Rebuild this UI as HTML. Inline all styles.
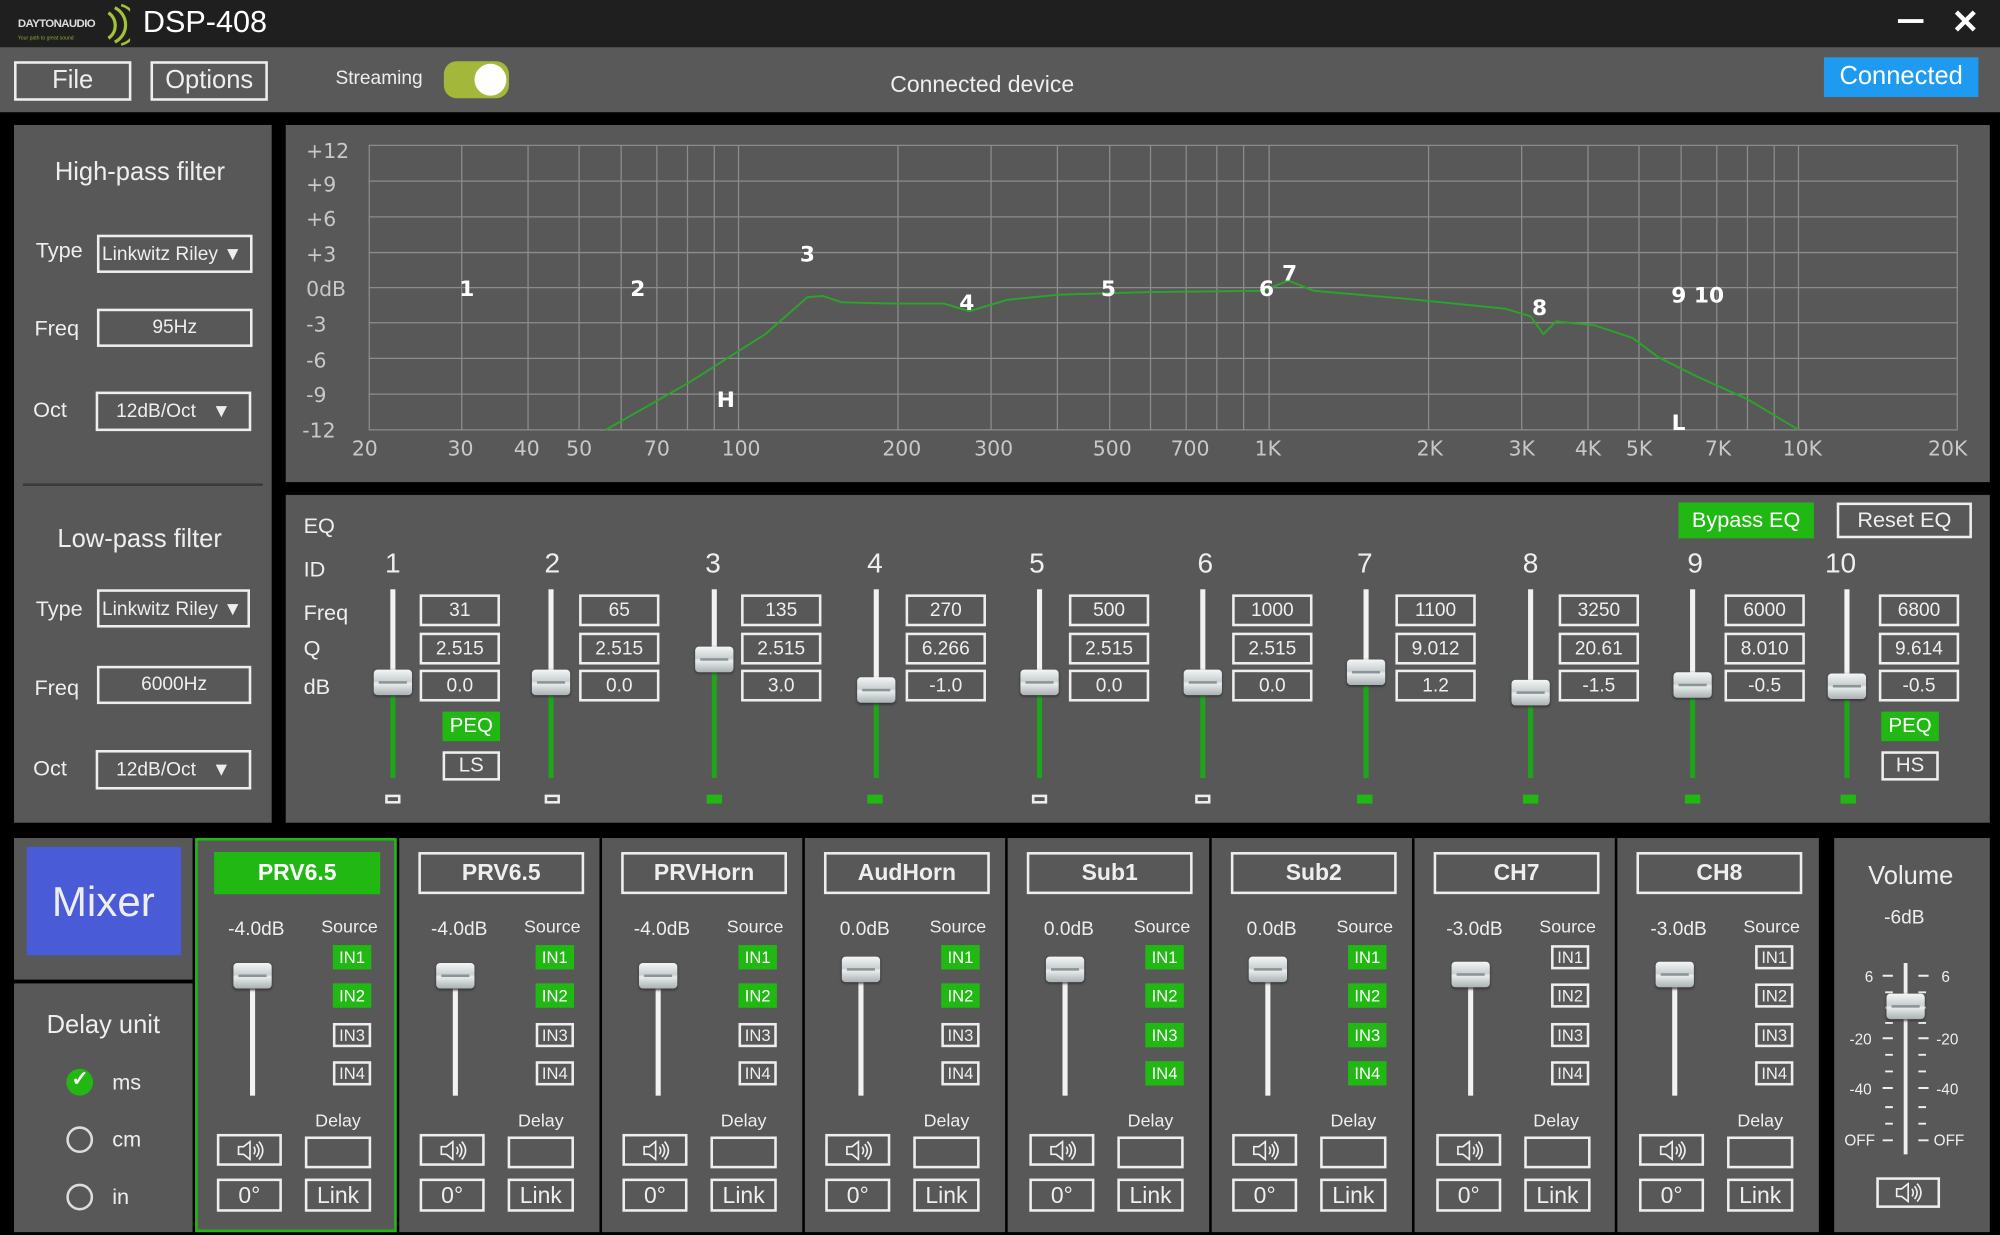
<!DOCTYPE html>
<html><head><meta charset="utf-8">
<style>
html,body{margin:0;padding:0;background:#000;width:2000px;height:1235px;overflow:hidden}
#r{position:absolute;left:0;top:0;width:1568px;height:968px;transform:scale(1.27551);transform-origin:0 0;font-family:"Liberation Sans",sans-serif;background:#000}
.p{position:absolute;background:#585858}
.t{position:absolute;color:#eee;white-space:nowrap;line-height:1}
.c{transform:translateX(-50%)}
.b{position:absolute;border:2px solid #eee;color:#eee;box-sizing:border-box;text-align:center;white-space:nowrap;display:flex;align-items:center;justify-content:center}
.g{background:#22b814;border-color:#22b814;color:#fff}
.h{position:absolute;width:30px;height:20px;border-radius:3px;background:linear-gradient(#f4f6f6,#c9cfd1 45%,#e8ecec 55%,#aab2b4);box-shadow:0 1px 2px #333}
.h:after{content:"";position:absolute;left:4px;right:4px;top:9px;height:2px;background:#8c9496}
.tw{position:absolute;width:4px;background:#f2f2f2}
.tg{position:absolute;width:4px;background:#1fa51a}
.v{font-size:15px}
.in{position:absolute;width:30px;height:19px;font-size:13px}
.ind{position:absolute;width:12px;height:7px;box-sizing:border-box}
.nm{font-size:18px;font-weight:bold}
</style></head><body><div id="r">
<div style="position:absolute;left:0;top:0;width:1568px;height:37px;background:#1f1f1f"></div>
<div class="t" style="left:14px;top:14px;font-size:9px;font-weight:bold;color:#ddd;letter-spacing:-0.5px">DAYTONAUDIO</div>
<div class="t" style="left:14px;top:28px;font-size:4px;color:#8a3">Your path to great sound</div>
<svg style="position:absolute;left:82px;top:2px" width="20" height="34"><path d="M3 8 A12 12 0 0 1 3 28" stroke="#a3c23a" stroke-width="2.5" fill="none"/><path d="M8 4 A15 15 0 0 1 8 31" stroke="#a3c23a" stroke-width="2.5" fill="none"/><path d="M13 2 A16 16 0 0 1 13 33" stroke="#a3c23a" stroke-width="2" fill="none"/></svg>
<div class="t" style="left:112px;top:6px;font-size:24px;color:#fff">DSP-408</div>
<div style="position:absolute;left:1488px;top:15px;width:20px;height:3px;background:#fff"></div>
<div class="t" style="left:1530px;top:4px;font-size:26px;color:#fff;font-weight:bold">✕</div>
<div style="position:absolute;left:0;top:37px;width:1568px;height:51px;background:#595959"></div>
<div class="b" style="left:11px;top:48px;width:92px;height:31px;font-size:20px">File</div>
<div class="b" style="left:118px;top:48px;width:92px;height:31px;font-size:20px">Options</div>
<div class="t" style="left:263px;top:54px;font-size:15px">Streaming</div>
<div style="position:absolute;left:348px;top:48px;width:51px;height:29px;border-radius:10px;background:#a3b83a"></div>
<div style="position:absolute;left:372px;top:50px;width:25px;height:25px;border-radius:50%;background:#fff"></div>
<div class="t" style="left:698px;top:57px;font-size:18px">Connected device</div>
<div class="b" style="left:1430px;top:45px;width:121px;height:31px;font-size:20px;background:#1e9bf0;border-color:#1e9bf0;color:#fff">Connected</div>

<div class="p" style="left:11px;top:98px;width:202px;height:547px"></div>
<div style="position:absolute;left:18px;top:379px;width:188px;height:2px;background:#3a3a3a"></div>
<div class="t" style="left:43px;top:125px;font-size:20px">High-pass filter</div>
<div class="t" style="left:28px;top:188px;font-size:17px">Type</div>
<div class="b" style="left:76px;top:184px;width:122px;height:30px;font-size:15px;justify-content:flex-start;padding-left:2px">Linkwitz Riley ▼</div>
<div class="t" style="left:27px;top:249px;font-size:17px">Freq</div>
<div class="b" style="left:76px;top:242px;width:122px;height:30px;font-size:15px;align-items:flex-start;padding-top:4px">95Hz</div>
<div class="t" style="left:26px;top:313px;font-size:17px">Oct</div>
<div class="b" style="left:75px;top:307px;width:122px;height:31px;font-size:15px">12dB/Oct &nbsp;&nbsp;▼</div>
<div class="t" style="left:45px;top:413px;font-size:20px">Low-pass filter</div>
<div class="t" style="left:28px;top:469px;font-size:17px">Type</div>
<div class="b" style="left:76px;top:462px;width:120px;height:30px;font-size:15px;justify-content:flex-start;padding-left:2px">Linkwitz Riley ▼</div>
<div class="t" style="left:27px;top:531px;font-size:17px">Freq</div>
<div class="b" style="left:76px;top:522px;width:121px;height:30px;font-size:15px;align-items:flex-start;padding-top:4px">6000Hz</div>
<div class="t" style="left:26px;top:594px;font-size:17px">Oct</div>
<div class="b" style="left:75px;top:588px;width:122px;height:31px;font-size:15px">12dB/Oct &nbsp;&nbsp;▼</div>

<div class="p" style="left:224px;top:98px;width:1336px;height:280px"></div>
<svg style="position:absolute;left:0;top:0" width="1568" height="968">
<g stroke="#8c8c8c" stroke-width="1">
<line x1="289" y1="114" x2="1535" y2="114"/><line x1="289" y1="142" x2="1535" y2="142"/><line x1="289" y1="170" x2="1535" y2="170"/><line x1="289" y1="198" x2="1535" y2="198"/><line x1="289" y1="225.5" x2="1535" y2="225.5"/><line x1="289" y1="253" x2="1535" y2="253"/><line x1="289" y1="281" x2="1535" y2="281"/><line x1="289" y1="309" x2="1535" y2="309"/><line x1="289" y1="337" x2="1535" y2="337"/>
<line x1="289.5" y1="114" x2="289.5" y2="337"/><line x1="362" y1="114" x2="362" y2="337"/><line x1="414" y1="114" x2="414" y2="337"/><line x1="454" y1="114" x2="454" y2="337"/><line x1="487" y1="114" x2="487" y2="337"/><line x1="515" y1="114" x2="515" y2="337"/><line x1="539" y1="114" x2="539" y2="337"/><line x1="560" y1="114" x2="560" y2="337"/><line x1="579" y1="114" x2="579" y2="337"/><line x1="704" y1="114" x2="704" y2="337"/><line x1="777" y1="114" x2="777" y2="337"/><line x1="829" y1="114" x2="829" y2="337"/><line x1="870" y1="114" x2="870" y2="337"/><line x1="902" y1="114" x2="902" y2="337"/><line x1="930" y1="114" x2="930" y2="337"/><line x1="954" y1="114" x2="954" y2="337"/><line x1="975" y1="114" x2="975" y2="337"/><line x1="995" y1="114" x2="995" y2="337"/><line x1="1120" y1="114" x2="1120" y2="337"/><line x1="1193" y1="114" x2="1193" y2="337"/><line x1="1245" y1="114" x2="1245" y2="337"/><line x1="1285" y1="114" x2="1285" y2="337"/><line x1="1318" y1="114" x2="1318" y2="337"/><line x1="1346" y1="114" x2="1346" y2="337"/><line x1="1370" y1="114" x2="1370" y2="337"/><line x1="1391" y1="114" x2="1391" y2="337"/><line x1="1410" y1="114" x2="1410" y2="337"/><line x1="1534.5" y1="114" x2="1534.5" y2="337"/>
</g>
<polyline fill="none" stroke="#2aa52a" stroke-width="1.5" points="475,337 540,300 600,262 633,233 645,232 660,237 700,238 740,238 760,244 790,235 830,231 900,229 990,228 1010,220 1030,228 1100,234 1180,242 1200,248 1210,262 1220,252 1250,255 1280,265 1300,280 1330,295 1370,313 1410,337"/>
<g font-family="DejaVu Sans,sans-serif" font-size="16" fill="#c8c8c8">
<text x="240" y="124">+12</text><text x="240" y="150">+9</text><text x="240" y="177">+6</text><text x="240" y="205">+3</text><text x="240" y="232">0dB</text><text x="240" y="260">-3</text><text x="240" y="288">-6</text><text x="240" y="315">-9</text><text x="237" y="343">-12</text>
<g text-anchor="middle"><text x="286" y="357">20</text><text x="361" y="357">30</text><text x="413" y="357">40</text><text x="454" y="357">50</text><text x="515" y="357">70</text><text x="581" y="357">100</text><text x="707" y="357">200</text><text x="779" y="357">300</text><text x="872" y="357">500</text><text x="933" y="357">700</text><text x="994" y="357">1K</text><text x="1121" y="357">2K</text><text x="1193" y="357">3K</text><text x="1245" y="357">4K</text><text x="1285" y="357">5K</text><text x="1347" y="357">7K</text><text x="1413" y="357">10K</text><text x="1527" y="357">20K</text></g>
</g>
<g font-family="DejaVu Sans,sans-serif" font-size="17" font-weight="bold" fill="#fff" text-anchor="middle">
<text x="366" y="232">1</text><text x="500" y="232">2</text><text x="633" y="205">3</text><text x="758" y="243">4</text><text x="869" y="232">5</text><text x="993" y="232">6</text><text x="1011" y="220">7</text><text x="1207" y="247">8</text><text x="1331" y="237">9 10</text><text x="569" y="319">H</text><text x="1316" y="337">L</text>
</g>
</svg>

<div class="p" style="left:224px;top:388px;width:1336px;height:257px"></div>
<div class="t" style="left:238px;top:404px;font-size:17px">EQ</div>
<div class="t" style="left:238px;top:438px;font-size:17px">ID</div>
<div class="t" style="left:238px;top:472px;font-size:17px">Freq</div>
<div class="t" style="left:238px;top:500px;font-size:17px">Q</div>
<div class="t" style="left:238px;top:530px;font-size:17px">dB</div>
<div class="b g" style="left:1316px;top:394px;width:106px;height:28px;font-size:17px">Bypass EQ</div>
<div class="b" style="left:1440px;top:394px;width:106px;height:28px;font-size:17px">Reset EQ</div>

<div class="t c" style="left:308px;top:431px;font-size:22px">1</div><div class="tw" style="left:306px;top:462px;height:73px"></div><div class="tg" style="left:306px;top:535px;height:75px"></div><div class="h" style="left:293px;top:525px"></div>
<div class="b v" style="left:329px;top:466px;width:63px;height:25px">31</div><div class="b v" style="left:329px;top:496px;width:63px;height:25px">2.515</div><div class="b v" style="left:329px;top:525px;width:63px;height:25px">0.0</div>
<div class="b g" style="left:347px;top:558px;width:45px;height:23px;font-size:16px">PEQ</div><div class="b" style="left:347px;top:589px;width:45px;height:23px;font-size:16px">LS</div><div class="ind" style="left:302px;top:623px;border:2px solid #eee"></div>

<div class="t c" style="left:433px;top:431px;font-size:22px">2</div><div class="tw" style="left:430px;top:462px;height:73px"></div><div class="tg" style="left:430px;top:535px;height:75px"></div><div class="h" style="left:417px;top:525px"></div>
<div class="b v" style="left:454px;top:466px;width:63px;height:25px">65</div><div class="b v" style="left:454px;top:496px;width:63px;height:25px">2.515</div><div class="b v" style="left:454px;top:525px;width:63px;height:25px">0.0</div><div class="ind" style="left:427px;top:623px;border:2px solid #eee"></div>

<div class="t c" style="left:559px;top:431px;font-size:22px">3</div><div class="tw" style="left:558px;top:462px;height:55px"></div><div class="tg" style="left:558px;top:517px;height:93px"></div><div class="h" style="left:545px;top:507px"></div>
<div class="b v" style="left:581px;top:466px;width:63px;height:25px">135</div><div class="b v" style="left:581px;top:496px;width:63px;height:25px">2.515</div><div class="b v" style="left:581px;top:525px;width:63px;height:25px">3.0</div><div class="ind" style="left:554px;top:623px;background:#22b814"></div>

<div class="t c" style="left:686px;top:431px;font-size:22px">4</div><div class="tw" style="left:685px;top:462px;height:79px"></div><div class="tg" style="left:685px;top:541px;height:69px"></div><div class="h" style="left:672px;top:531px"></div>
<div class="b v" style="left:710px;top:466px;width:63px;height:25px">270</div><div class="b v" style="left:710px;top:496px;width:63px;height:25px">6.266</div><div class="b v" style="left:710px;top:525px;width:63px;height:25px">-1.0</div><div class="ind" style="left:680px;top:623px;background:#22b814"></div>

<div class="t c" style="left:813px;top:431px;font-size:22px">5</div><div class="tw" style="left:813px;top:462px;height:73px"></div><div class="tg" style="left:813px;top:535px;height:75px"></div><div class="h" style="left:800px;top:525px"></div>
<div class="b v" style="left:838px;top:466px;width:63px;height:25px">500</div><div class="b v" style="left:838px;top:496px;width:63px;height:25px">2.515</div><div class="b v" style="left:838px;top:525px;width:63px;height:25px">0.0</div><div class="ind" style="left:809px;top:623px;border:2px solid #eee"></div>

<div class="t c" style="left:945px;top:431px;font-size:22px">6</div><div class="tw" style="left:941px;top:462px;height:73px"></div><div class="tg" style="left:941px;top:535px;height:75px"></div><div class="h" style="left:928px;top:525px"></div>
<div class="b v" style="left:966px;top:466px;width:63px;height:25px">1000</div><div class="b v" style="left:966px;top:496px;width:63px;height:25px">2.515</div><div class="b v" style="left:966px;top:525px;width:63px;height:25px">0.0</div><div class="ind" style="left:937px;top:623px;border:2px solid #eee"></div>

<div class="t c" style="left:1070px;top:431px;font-size:22px">7</div><div class="tw" style="left:1069px;top:462px;height:65px"></div><div class="tg" style="left:1069px;top:527px;height:83px"></div><div class="h" style="left:1056px;top:517px"></div>
<div class="b v" style="left:1094px;top:466px;width:63px;height:25px">1100</div><div class="b v" style="left:1094px;top:496px;width:63px;height:25px">9.012</div><div class="b v" style="left:1094px;top:525px;width:63px;height:25px">1.2</div><div class="ind" style="left:1064px;top:623px;background:#22b814"></div>

<div class="t c" style="left:1200px;top:431px;font-size:22px">8</div><div class="tw" style="left:1198px;top:462px;height:81px"></div><div class="tg" style="left:1198px;top:543px;height:67px"></div><div class="h" style="left:1185px;top:533px"></div>
<div class="b v" style="left:1222px;top:466px;width:63px;height:25px">3250</div><div class="b v" style="left:1222px;top:496px;width:63px;height:25px">20.61</div><div class="b v" style="left:1222px;top:525px;width:63px;height:25px">-1.5</div><div class="ind" style="left:1194px;top:623px;background:#22b814"></div>

<div class="t c" style="left:1329px;top:431px;font-size:22px">9</div><div class="tw" style="left:1325px;top:462px;height:75px"></div><div class="tg" style="left:1325px;top:537px;height:73px"></div><div class="h" style="left:1312px;top:527px"></div>
<div class="b v" style="left:1352px;top:466px;width:63px;height:25px">6000</div><div class="b v" style="left:1352px;top:496px;width:63px;height:25px">8.010</div><div class="b v" style="left:1352px;top:525px;width:63px;height:25px">-0.5</div><div class="ind" style="left:1321px;top:623px;background:#22b814"></div>

<div class="t c" style="left:1443px;top:431px;font-size:22px">10</div><div class="tw" style="left:1446px;top:462px;height:76px"></div><div class="tg" style="left:1446px;top:538px;height:72px"></div><div class="h" style="left:1433px;top:528px"></div>
<div class="b v" style="left:1473px;top:466px;width:63px;height:25px">6800</div><div class="b v" style="left:1473px;top:496px;width:63px;height:25px">9.614</div><div class="b v" style="left:1473px;top:525px;width:63px;height:25px">-0.5</div>
<div class="b g" style="left:1475px;top:558px;width:45px;height:23px;font-size:16px">PEQ</div><div class="b" style="left:1475px;top:589px;width:45px;height:23px;font-size:16px">HS</div><div class="ind" style="left:1443px;top:623px;background:#22b814"></div>

<div class="p" style="left:11px;top:657px;width:140px;height:111px"></div>
<div style="position:absolute;left:21px;top:664px;width:121px;height:85px;background:#4a5bd8"></div>
<div class="t c" style="left:81px;top:690px;font-size:33px">Mixer</div>
<div class="p" style="left:11px;top:771px;width:140px;height:195px"></div>
<div class="t c" style="left:81px;top:794px;font-size:20px">Delay unit</div>
<div style="position:absolute;left:52px;top:838px;width:21px;height:21px;border-radius:50%;background:#22b814"></div>
<div class="t" style="left:56px;top:839px;font-size:16px;color:#fff;font-weight:bold">✓</div>
<div class="t" style="left:88px;top:840px;font-size:17px">ms</div>
<div style="position:absolute;left:52px;top:883px;width:17px;height:17px;border-radius:50%;border:2px solid #ddd"></div>
<div class="t" style="left:88px;top:885px;font-size:17px">cm</div>
<div style="position:absolute;left:52px;top:928px;width:17px;height:17px;border-radius:50%;border:2px solid #ddd"></div>
<div class="t" style="left:88px;top:930px;font-size:17px">in</div>

<div class="p" style="left:153px;top:657px;width:158px;height:309px;border:2px solid #22b814;box-sizing:border-box"></div>
<div class="p" style="left:313px;top:657px;width:157px;height:309px"></div>
<div class="p" style="left:472px;top:657px;width:157px;height:309px"></div>
<div class="p" style="left:631px;top:657px;width:157px;height:309px"></div>
<div class="p" style="left:790px;top:657px;width:158px;height:309px"></div>
<div class="p" style="left:950px;top:657px;width:157px;height:309px"></div>
<div class="p" style="left:1109px;top:657px;width:157px;height:309px"></div>
<div class="p" style="left:1268px;top:657px;width:158px;height:309px"></div>
<div class="p" style="left:1438px;top:657px;width:122px;height:309px"></div>

<!-- ch1 -->
<div class="b g nm" style="left:168px;top:668px;width:130px;height:33px">PRV6.5</div>
<div class="t c" style="left:201px;top:721px;font-size:15px">-4.0dB</div><div class="t c" style="left:274px;top:719px;font-size:14px">Source</div>
<div class="b g in" style="left:261px;top:741px">IN1</div><div class="b g in" style="left:261px;top:771px">IN2</div><div class="b in" style="left:261px;top:802px">IN3</div><div class="b in" style="left:261px;top:832px">IN4</div>
<div class="tw" style="left:196px;top:765px;height:94px"></div><div class="h" style="left:183px;top:755px"></div>
<div class="t c" style="left:265px;top:871px;font-size:14px">Delay</div>
<div class="b" style="left:170px;top:889px;width:51px;height:25px"><svg width="24" height="16" viewBox="0 0 24 16"><path d="M3 5h4l5-4v14l-5-4H3z M15 5q2 3 0 6 M17 3q4 5 0 10 M19 1q6 7 0 14" fill="none" stroke="#eee" stroke-width="1.3"/></svg></div><div class="b" style="left:239px;top:891px;width:52px;height:25px"></div>
<div class="b" style="left:170px;top:924px;width:51px;height:26px;font-size:18px">0°</div><div class="b" style="left:239px;top:924px;width:52px;height:26px;font-size:18px">Link</div>
<!-- ch2 -->
<div class="b nm" style="left:328px;top:668px;width:130px;height:33px">PRV6.5</div>
<div class="t c" style="left:360px;top:721px;font-size:15px">-4.0dB</div><div class="t c" style="left:433px;top:719px;font-size:14px">Source</div>
<div class="b g in" style="left:420px;top:741px">IN1</div><div class="b g in" style="left:420px;top:771px">IN2</div><div class="b in" style="left:420px;top:802px">IN3</div><div class="b in" style="left:420px;top:832px">IN4</div>
<div class="tw" style="left:355px;top:765px;height:94px"></div><div class="h" style="left:342px;top:755px"></div>
<div class="t c" style="left:424px;top:871px;font-size:14px">Delay</div>
<div class="b" style="left:329px;top:889px;width:51px;height:25px"><svg width="24" height="16" viewBox="0 0 24 16"><path d="M3 5h4l5-4v14l-5-4H3z M15 5q2 3 0 6 M17 3q4 5 0 10 M19 1q6 7 0 14" fill="none" stroke="#eee" stroke-width="1.3"/></svg></div><div class="b" style="left:398px;top:891px;width:52px;height:25px"></div>
<div class="b" style="left:329px;top:924px;width:51px;height:26px;font-size:18px">0°</div><div class="b" style="left:398px;top:924px;width:52px;height:26px;font-size:18px">Link</div>
<!-- ch3 -->
<div class="b nm" style="left:487px;top:668px;width:130px;height:33px">PRVHorn</div>
<div class="t c" style="left:519px;top:721px;font-size:15px">-4.0dB</div><div class="t c" style="left:592px;top:719px;font-size:14px">Source</div>
<div class="b g in" style="left:579px;top:741px">IN1</div><div class="b g in" style="left:579px;top:771px">IN2</div><div class="b in" style="left:579px;top:802px">IN3</div><div class="b in" style="left:579px;top:832px">IN4</div>
<div class="tw" style="left:514px;top:765px;height:94px"></div><div class="h" style="left:501px;top:755px"></div>
<div class="t c" style="left:583px;top:871px;font-size:14px">Delay</div>
<div class="b" style="left:488px;top:889px;width:51px;height:25px"><svg width="24" height="16" viewBox="0 0 24 16"><path d="M3 5h4l5-4v14l-5-4H3z M15 5q2 3 0 6 M17 3q4 5 0 10 M19 1q6 7 0 14" fill="none" stroke="#eee" stroke-width="1.3"/></svg></div><div class="b" style="left:557px;top:891px;width:52px;height:25px"></div>
<div class="b" style="left:488px;top:924px;width:51px;height:26px;font-size:18px">0°</div><div class="b" style="left:557px;top:924px;width:52px;height:26px;font-size:18px">Link</div>
<!-- ch4 -->
<div class="b nm" style="left:646px;top:668px;width:130px;height:33px">AudHorn</div>
<div class="t c" style="left:678px;top:721px;font-size:15px">0.0dB</div><div class="t c" style="left:751px;top:719px;font-size:14px">Source</div>
<div class="b g in" style="left:738px;top:741px">IN1</div><div class="b g in" style="left:738px;top:771px">IN2</div><div class="b in" style="left:738px;top:802px">IN3</div><div class="b in" style="left:738px;top:832px">IN4</div>
<div class="tw" style="left:673px;top:760px;height:99px"></div><div class="h" style="left:660px;top:750px"></div>
<div class="t c" style="left:742px;top:871px;font-size:14px">Delay</div>
<div class="b" style="left:647px;top:889px;width:51px;height:25px"><svg width="24" height="16" viewBox="0 0 24 16"><path d="M3 5h4l5-4v14l-5-4H3z M15 5q2 3 0 6 M17 3q4 5 0 10 M19 1q6 7 0 14" fill="none" stroke="#eee" stroke-width="1.3"/></svg></div><div class="b" style="left:716px;top:891px;width:52px;height:25px"></div>
<div class="b" style="left:647px;top:924px;width:51px;height:26px;font-size:18px">0°</div><div class="b" style="left:716px;top:924px;width:52px;height:26px;font-size:18px">Link</div>
<!-- ch5 -->
<div class="b nm" style="left:805px;top:668px;width:130px;height:33px">Sub1</div>
<div class="t c" style="left:838px;top:721px;font-size:15px">0.0dB</div><div class="t c" style="left:911px;top:719px;font-size:14px">Source</div>
<div class="b g in" style="left:898px;top:741px">IN1</div><div class="b g in" style="left:898px;top:771px">IN2</div><div class="b g in" style="left:898px;top:802px">IN3</div><div class="b g in" style="left:898px;top:832px">IN4</div>
<div class="tw" style="left:833px;top:760px;height:99px"></div><div class="h" style="left:820px;top:750px"></div>
<div class="t c" style="left:902px;top:871px;font-size:14px">Delay</div>
<div class="b" style="left:807px;top:889px;width:51px;height:25px"><svg width="24" height="16" viewBox="0 0 24 16"><path d="M3 5h4l5-4v14l-5-4H3z M15 5q2 3 0 6 M17 3q4 5 0 10 M19 1q6 7 0 14" fill="none" stroke="#eee" stroke-width="1.3"/></svg></div><div class="b" style="left:876px;top:891px;width:52px;height:25px"></div>
<div class="b" style="left:807px;top:924px;width:51px;height:26px;font-size:18px">0°</div><div class="b" style="left:876px;top:924px;width:52px;height:26px;font-size:18px">Link</div>
<!-- ch6 -->
<div class="b nm" style="left:965px;top:668px;width:130px;height:33px">Sub2</div>
<div class="t c" style="left:997px;top:721px;font-size:15px">0.0dB</div><div class="t c" style="left:1070px;top:719px;font-size:14px">Source</div>
<div class="b g in" style="left:1057px;top:741px">IN1</div><div class="b g in" style="left:1057px;top:771px">IN2</div><div class="b g in" style="left:1057px;top:802px">IN3</div><div class="b g in" style="left:1057px;top:832px">IN4</div>
<div class="tw" style="left:992px;top:760px;height:99px"></div><div class="h" style="left:979px;top:750px"></div>
<div class="t c" style="left:1061px;top:871px;font-size:14px">Delay</div>
<div class="b" style="left:966px;top:889px;width:51px;height:25px"><svg width="24" height="16" viewBox="0 0 24 16"><path d="M3 5h4l5-4v14l-5-4H3z M15 5q2 3 0 6 M17 3q4 5 0 10 M19 1q6 7 0 14" fill="none" stroke="#eee" stroke-width="1.3"/></svg></div><div class="b" style="left:1035px;top:891px;width:52px;height:25px"></div>
<div class="b" style="left:966px;top:924px;width:51px;height:26px;font-size:18px">0°</div><div class="b" style="left:1035px;top:924px;width:52px;height:26px;font-size:18px">Link</div>
<!-- ch7 -->
<div class="b nm" style="left:1124px;top:668px;width:130px;height:33px">CH7</div>
<div class="t c" style="left:1156px;top:721px;font-size:15px">-3.0dB</div><div class="t c" style="left:1229px;top:719px;font-size:14px">Source</div>
<div class="b in" style="left:1216px;top:741px">IN1</div><div class="b in" style="left:1216px;top:771px">IN2</div><div class="b in" style="left:1216px;top:802px">IN3</div><div class="b in" style="left:1216px;top:832px">IN4</div>
<div class="tw" style="left:1151px;top:764px;height:95px"></div><div class="h" style="left:1138px;top:754px"></div>
<div class="t c" style="left:1220px;top:871px;font-size:14px">Delay</div>
<div class="b" style="left:1126px;top:889px;width:51px;height:25px"><svg width="24" height="16" viewBox="0 0 24 16"><path d="M3 5h4l5-4v14l-5-4H3z M15 5q2 3 0 6 M17 3q4 5 0 10 M19 1q6 7 0 14" fill="none" stroke="#eee" stroke-width="1.3"/></svg></div><div class="b" style="left:1195px;top:891px;width:52px;height:25px"></div>
<div class="b" style="left:1126px;top:924px;width:51px;height:26px;font-size:18px">0°</div><div class="b" style="left:1195px;top:924px;width:52px;height:26px;font-size:18px">Link</div>
<!-- ch8 -->
<div class="b nm" style="left:1283px;top:668px;width:130px;height:33px">CH8</div>
<div class="t c" style="left:1316px;top:721px;font-size:15px">-3.0dB</div><div class="t c" style="left:1389px;top:719px;font-size:14px">Source</div>
<div class="b in" style="left:1376px;top:741px">IN1</div><div class="b in" style="left:1376px;top:771px">IN2</div><div class="b in" style="left:1376px;top:802px">IN3</div><div class="b in" style="left:1376px;top:832px">IN4</div>
<div class="tw" style="left:1311px;top:764px;height:95px"></div><div class="h" style="left:1298px;top:754px"></div>
<div class="t c" style="left:1380px;top:871px;font-size:14px">Delay</div>
<div class="b" style="left:1285px;top:889px;width:51px;height:25px"><svg width="24" height="16" viewBox="0 0 24 16"><path d="M3 5h4l5-4v14l-5-4H3z M15 5q2 3 0 6 M17 3q4 5 0 10 M19 1q6 7 0 14" fill="none" stroke="#eee" stroke-width="1.3"/></svg></div><div class="b" style="left:1354px;top:891px;width:52px;height:25px"></div>
<div class="b" style="left:1285px;top:924px;width:51px;height:26px;font-size:18px">0°</div><div class="b" style="left:1354px;top:924px;width:52px;height:26px;font-size:18px">Link</div>

<div class="t c" style="left:1498px;top:677px;font-size:20px">Volume</div>
<div class="t c" style="left:1493px;top:712px;font-size:15px">-6dB</div>
<svg style="position:absolute;left:1438px;top:740px" width="122" height="175">
<g stroke="#eee" stroke-width="1.5">
<line x1="56" y1="15" x2="56" y2="165" stroke-width="3"/>
<line x1="38" y1="25" x2="46" y2="25"/><line x1="66" y1="25" x2="74" y2="25"/>
<line x1="40" y1="38" x2="46" y2="38"/><line x1="66" y1="38" x2="72" y2="38"/>
<line x1="40" y1="50" x2="46" y2="50"/><line x1="66" y1="50" x2="72" y2="50"/>
<line x1="40" y1="62" x2="46" y2="62"/><line x1="66" y1="62" x2="72" y2="62"/>
<line x1="38" y1="74" x2="46" y2="74"/><line x1="66" y1="74" x2="74" y2="74"/>
<line x1="40" y1="87" x2="46" y2="87"/><line x1="66" y1="87" x2="72" y2="87"/>
<line x1="40" y1="100" x2="46" y2="100"/><line x1="66" y1="100" x2="72" y2="100"/>
<line x1="38" y1="113" x2="46" y2="113"/><line x1="66" y1="113" x2="74" y2="113"/>
<line x1="40" y1="128" x2="46" y2="128"/><line x1="66" y1="128" x2="72" y2="128"/>
<line x1="40" y1="141" x2="46" y2="141"/><line x1="66" y1="141" x2="72" y2="141"/>
<line x1="38" y1="154" x2="46" y2="154"/><line x1="66" y1="154" x2="74" y2="154"/>
</g>
<g font-family="Liberation Sans,sans-serif" font-size="12" fill="#eee">
<text x="24" y="30">6</text><text x="84" y="30">6</text>
<text x="12" y="79">-20</text><text x="80" y="79">-20</text>
<text x="12" y="118">-40</text><text x="80" y="118">-40</text>
<text x="8" y="158">OFF</text><text x="78" y="158">OFF</text>
</g>
</svg>
<div class="h" style="left:1479px;top:779px"></div>
<div class="b" style="left:1471px;top:923px;width:50px;height:24px"><svg width="24" height="16" viewBox="0 0 24 16"><path d="M3 5h4l5-4v14l-5-4H3z M15 5q2 3 0 6 M17 3q4 5 0 10 M19 1q6 7 0 14" fill="none" stroke="#eee" stroke-width="1.3"/></svg></div>
</div></body></html>
